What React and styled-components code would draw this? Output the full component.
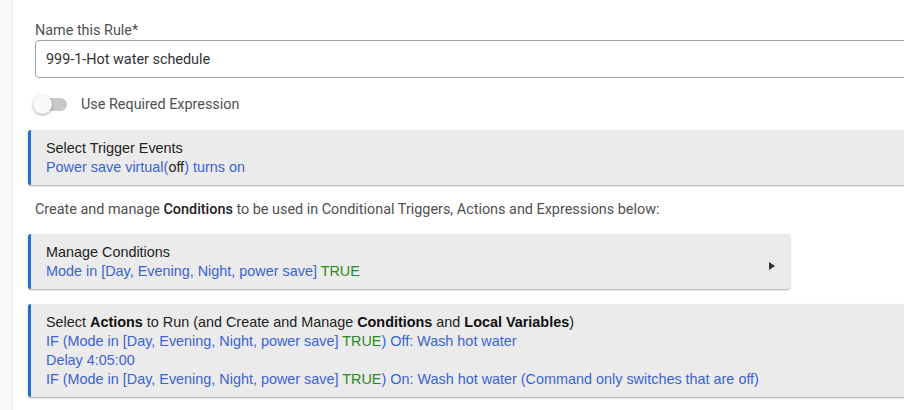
import React from 'react'
import styled, { createGlobalStyle } from 'styled-components'

const GlobalStyle = createGlobalStyle`
  html, body {
    margin: 0;
    padding: 0;
    background: #ffffff;
    overflow: hidden;
  }
`

export default function App() {
  return (
    <Page>
      <GlobalStyle />
      <SideStrip />
      <Main>
        <Field>
          <FieldLabel>Name this Rule*</FieldLabel>
          <TextInput defaultValue="999-1-Hot water schedule" />
        </Field>
        <ToggleRow>
          <Switch>
            <Thumb />
          </Switch>
          <ToggleText>Use Required Expression</ToggleText>
        </ToggleRow>

        <Card>
          <CardTitle>Select Trigger Events</CardTitle>
          <Line>
            <Link>Power save virtual(</Link>off<Link>) turns on</Link>
          </Line>
        </Card>

        <Note>
          Create and manage <b>Conditions</b> to be used in Conditional Triggers, Actions and Expressions below:
        </Note>

        <Card $width="762px">
          <CardTitle>Manage Conditions</CardTitle>
          <Line>
            <Link>Mode in [Day, Evening, Night, power save] </Link><True>TRUE</True>
          </Line>
          <Arrow />
        </Card>

        <Card>
          <CardTitle>
            Select <b>Actions</b> to Run (and Create and Manage <b>Conditions</b> and <b>Local Variables</b>)
          </CardTitle>
          <Line>
            <Link>IF (Mode in [Day, Evening, Night, power save] </Link><True>TRUE</True><Link>) Off: Wash hot water</Link>
          </Line>
          <Line>
            <Link>Delay 4:05:00</Link>
          </Line>
          <Line>
            <Link>IF (Mode in [Day, Evening, Night, power save] </Link><True>TRUE</True><Link>) On: Wash hot water (Command only switches that are off)</Link>
          </Line>
        </Card>
      </Main>
    </Page>
  )
}

const Page = styled.div`
  display: flex;
  width: 1100px;
  height: 410px;
  background: #ffffff;
`

const SideStrip = styled.div`
  width: 12px;
  flex-shrink: 0;
  background: #fafafa;
  border-right: 1px solid #ebebeb;
`

const Main = styled.div`
  flex: 1;
  display: flex;
  flex-direction: column;
  padding: 22px 0 0 15px;
`

// 규칙 이름 입력
const Field = styled.div`
  display: flex;
  flex-direction: column;
  padding-left: 7px;
`

const FieldLabel = styled.label`
  font-family: Roboto, "Liberation Sans", sans-serif;
  font-size: 14.4px;
  line-height: 17px;
  color: #505050;
  margin-bottom: 1px;
`

const TextInput = styled.input`
  box-sizing: border-box;
  height: 38px;
  width: 100%;
  border: 1px solid #a0a0a0;
  border-radius: 4px;
  padding: 0 10px;
  font-family: Roboto, "Liberation Sans", sans-serif;
  font-size: 14.4px;
  color: #333;
  outline: none;
`

// 토글
const ToggleRow = styled.div`
  display: flex;
  align-items: center;
  height: 20px;
  margin: 18px 0 17px 7px;
`

const Switch = styled.div`
  position: relative;
  width: 28px;
  height: 13px;
  margin-left: 4px;
  border-radius: 7px;
  background: #c9c9c9;
`

const Thumb = styled.div`
  position: absolute;
  left: -6px;
  top: -3.5px;
  width: 19px;
  height: 19px;
  border-radius: 50%;
  background: #fafafa;
  box-shadow: 0 1px 3px rgba(0, 0, 0, 0.35);
`

const ToggleText = styled.span`
  margin-left: 14px;
  font-family: Roboto, "Liberation Sans", sans-serif;
  font-size: 14.4px;
  color: #505050;
`

// 카드
const Card = styled.div`
  position: relative;
  box-sizing: border-box;
  width: ${p => p.$width || '100%'};
  padding: 9px 15px 8px;
  background: #ebebeb;
  border-left: 3px solid #1a73d1;
  border-radius: 3px;
  box-shadow: 0 1px 2px rgba(0, 0, 0, 0.35);
  font-family: "Liberation Sans", Arial, sans-serif;
  font-size: 14.4px;
  line-height: 19px;
  color: #222;
  margin-bottom: 15px;

  b {
    font-weight: bold;
    color: #111;
  }
`

const CardTitle = styled.div`
  color: #222;
`

const Line = styled.div`
  color: #222;
`

const Link = styled.span`
  color: #3a63d3;
`

const True = styled.span`
  color: #2a8a22;
`

const Arrow = styled.span`
  position: absolute;
  right: 15px;
  top: 28px;
  width: 0;
  height: 0;
  border-top: 4px solid transparent;
  border-bottom: 4px solid transparent;
  border-left: 6px solid #333;
`

const Note = styled.div`
  font-family: Roboto, "Liberation Sans", sans-serif;
  font-size: 14.4px;
  line-height: 20px;
  color: #505050;
  padding-left: 7px;
  margin: 0 0 14px;

  b {
    font-weight: 500;
    color: #222;
  }
`
